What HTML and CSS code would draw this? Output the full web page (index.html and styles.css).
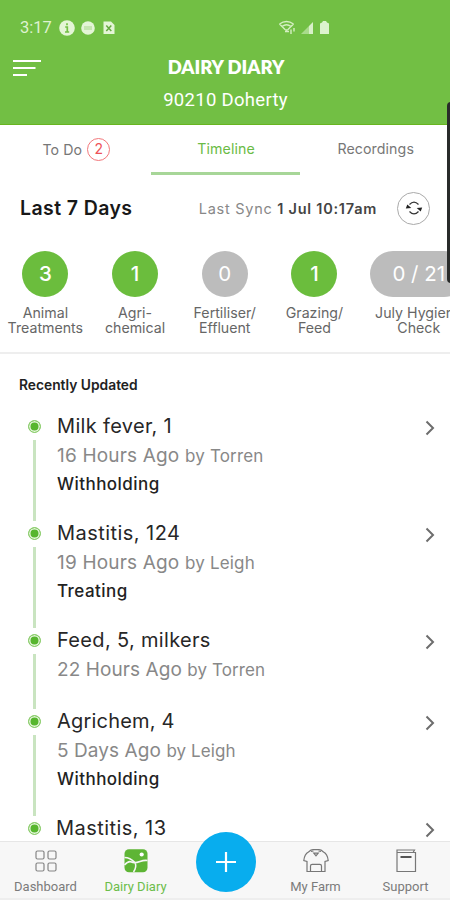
FILE: index.html
```html
<!DOCTYPE html>
<html lang="en">
<head>
<meta charset="utf-8">
<title>Dairy Diary</title>
<link rel="stylesheet" href="styles.css">
</head>
<body>
<div class="app">
  <header class="header">
    <div class="status">
      <span class="clock">3:17</span>
      <svg class="status-left" width="60" height="16" viewBox="0 0 60 16">
        <circle cx="8" cy="8" r="7.8" fill="#e4f5d6"/>
        <path d="M8 3.3v2M6.2 7H8.300v5M6 12h4.200" stroke="#72bf44" stroke-width="1.700" fill="none"/>
        <circle cx="29" cy="8" r="6.800" fill="#e4f5d6"/>
        <path d="M25 7h8M25 9h8" stroke="#a5d888" stroke-width="1.200"/>
        <path d="M44.500 1.500h7.500l3.500 3.500v9h-11z" fill="#e4f5d6"/>
        <path d="M47.300 5.500l5 5.500M52.300 5.500l-5 5.500" stroke="#64a93e" stroke-width="1.500"/>
      </svg>
      <svg class="status-right" width="52" height="16" viewBox="0 0 52 16">
        <g fill="none" stroke="#d5efc3" stroke-width="1.400">
          <path d="M1.500 4Q8.500-1 15.500 4M4 6.500q4.500-3.500 9 0M1.500 4l5.500 5.500q1.500 1 3 0L15.500 4M7 11.500h4M13 9.500v4.500M16 8v3.500"/>
        </g>
        <path d="M23 14l8-8v8z" fill="#a9db8b"/><path d="M31 6L35 2v12h-4z" fill="#d8f0c8"/>
        <path d="M42 3.500L44 2.500 45 1h3l1 1.500 2 1V14h-9z" fill="#dcf3cd"/>
      </svg>
    </div>
    <svg class="menu" width="28" height="18" viewBox="0 0 28 18"><path d="M0 2h28M0 9h22.500M0 16h14" stroke="#fff" stroke-width="2.200"/></svg>
    <h1 class="title">DAIRY DIARY</h1>
    <p class="farm">90210 Doherty</p>
  </header>

  <nav class="tabs">
    <div class="tab todo">To Do <span class="count">2</span></div>
    <div class="tab active">Timeline</div>
    <div class="tab">Recordings</div>
  </nav>

  <section class="summary">
    <div class="summary-head">
      <h2 class="range">Last 7 Days</h2>
      <p class="sync">Last Sync <b>1 Jul 10:17am</b></p>
      <span class="refresh"><svg width="18" height="18" viewBox="0 0 18 18"><path d="M4.500 5.500Q9 .8 13.500 5.500M4.500 12.500Q9 17.200 13.500 12.500" fill="none" stroke="#333" stroke-width="1.200"/><path d="M.8 9.500l1.500-4 4 3.500zM17.200 8.500l-1.500 4-4-3.500z" fill="#222"/></svg></span>
    </div>
    <div class="stats">
      <div class="stat"><span class="bubble">3</span><span>Animal<br>Treatments</span></div>
      <div class="stat"><span class="bubble">1</span><span>Agri-<br>chemical</span></div>
      <div class="stat"><span class="bubble none">0</span><span>Fertiliser/<br>Effluent</span></div>
      <div class="stat"><span class="bubble">1</span><span>Grazing/<br>Feed</span></div>
      <div class="stat wide"><span class="bubble none">0 / 21</span><span>July Hygiene<br>Check</span></div>
    </div>
  </section>

  <main class="timeline">
    <h3 class="heading">Recently Updated</h3>
    <article class="entry">
      <div class="rail"><i class="dot"></i><i class="line"></i></div>
      <div class="body"><h4>Milk fever, 1</h4><p class="when">16 Hours Ago <small>by Torren</small></p><p class="state">Withholding</p></div>
      <svg class="chevron" width="10" height="16" viewBox="0 0 10 16"><path d="M1.500 1.500L8 8l-6.500 6.500"/></svg>
    </article>
    <article class="entry">
      <div class="rail"><i class="dot"></i><i class="line"></i></div>
      <div class="body"><h4 class="loose">Mastitis, 124</h4><p class="when">19 Hours Ago <small>by Leigh</small></p><p class="state">Treating</p></div>
      <svg class="chevron" width="10" height="16" viewBox="0 0 10 16"><path d="M1.500 1.500L8 8l-6.500 6.500"/></svg>
    </article>
    <article class="entry short">
      <div class="rail"><i class="dot"></i><i class="line"></i></div>
      <div class="body"><h4>Feed, 5, milkers</h4><p class="when tight">22 Hours Ago <small>by Torren</small></p></div>
      <svg class="chevron" width="10" height="16" viewBox="0 0 10 16"><path d="M1.500 1.500L8 8l-6.500 6.500"/></svg>
    </article>
    <article class="entry">
      <div class="rail"><i class="dot"></i><i class="line"></i></div>
      <div class="body"><h4 class="snug">Agrichem, 4</h4><p class="when tight">5 Days Ago <small>by Leigh</small></p><p class="state">Withholding</p></div>
      <svg class="chevron" width="10" height="16" viewBox="0 0 10 16"><path d="M1.500 1.500L8 8l-6.500 6.500"/></svg>
    </article>
    <article class="entry last">
      <div class="rail"><i class="dot"></i></div>
      <div class="body"><h4 class="loose">Mastitis, 13</h4></div>
      <svg class="chevron" width="10" height="16" viewBox="0 0 10 16"><path d="M1.500 1.500L8 8l-6.500 6.500"/></svg>
    </article>
  </main>

  <nav class="bottom">
    <div class="item">
      <svg width="26" height="26" viewBox="0 0 26 26"><g fill="none" stroke="#858585" stroke-width="1.200"><rect x="3" y="3" width="8" height="8" rx="1.500"/><rect x="15" y="3" width="8" height="8" rx="1.500"/><rect x="3" y="15" width="8" height="8" rx="1.500"/><rect x="15" y="15" width="8" height="8" rx="1.500"/></g></svg>
      <span>Dashboard</span>
    </div>
    <div class="item current">
      <svg width="26" height="26" viewBox="0 0 26 26"><rect x="1.500" y="1.300" width="23" height="23" rx="4.500" fill="#5eb535"/><path d="M1.500 9.500Q7 9.500 12 14.500M1.500 17Q5.500 12.500 8.500 14T17 13.500Q21 12 24.500 12.500M12 14.500Q14 19 10.500 24" fill="none" stroke="#f7f7f7" stroke-width="1.500"/><circle cx="18.700" cy="6.500" r="2.100" fill="#fff"/></svg>
      <span>Dairy Diary</span>
    </div>
    <div class="item add"><span class="fab"><svg width="24" height="24" viewBox="0 0 24 24"><path d="M12 2v20M2 12h20" stroke="#fff" stroke-width="2.200"/></svg></span></div>
    <div class="item">
      <svg width="26" height="26" viewBox="0 0 26 26"><g fill="none" stroke="#777" stroke-width="1.200"><path d="M4 23.500V13.500L.8 12.500Q1.500 6 5.500 4Q8 1.700 10 1.700H16Q18 1.700 20.500 4Q24.500 6 25.200 12.500L22 13.500V23.500z"/><path d="M7.500 23V18Q7.500 16.300 9.200 16.300H16.800Q18.500 16.300 18.500 18V23M8 3.500l2.500-.5M18 3.500l-2.500-.5"/><path d="M10.800 5.200h4.400L13 7.800z"/></g></svg>
      <span>My Farm</span>
    </div>
    <div class="item">
      <svg width="26" height="26" viewBox="0 0 26 26"><g fill="none" stroke="#777" stroke-width="1.200"><path d="M4 4.500v19h18.500v-19zM4 4.500V2h17.500l-1.500 2.500"/><path d="M7.500 9h11" stroke="#555" stroke-width="2"/></g></svg>
      <span>Support</span>
    </div>
  </nav>
  <div class="edge"></div>
</div>
</body>
</html>
```
FILE: styles.css
```css
* { box-sizing: border-box; }
body, h1, h2, h3, h4, p { margin: 0; font-weight: 400; }
body { font-family: Inter, sans-serif; background: #fff; overflow: hidden; }
.app { position: relative; width: 450px; height: 900px; display: flex; flex-direction: column; overflow: hidden; }

.header { flex: none; height: 125px; padding-top: 20px; background: #72bf44; border-bottom: 1px solid #68b51f; color: #fff; display: grid; grid-template-columns: 54px 1fr 54px; grid-template-rows: 16px 62px; align-content: start; }
.status { grid-column: 1 / 4; display: flex; align-items: center; height: 16px; padding: 0 120px 0 20px; }
.clock { width: 39px; font: 16.500px/16px Roboto, sans-serif; color: #def2d0; }
.status-left { display: block; }
.status-right { display: block; margin-left: auto; }
.menu { grid-row: 2; margin: 23px 0 0 13px; }
.title { grid-row: 2; grid-column: 2; margin-top: 19px; text-align: center; font: 800 18.500px/24px Lato, sans-serif; padding-left: 2px; }
.farm { grid-row: 3; grid-column: 2; text-align: center; font: 18.500px/24px Roboto, sans-serif; letter-spacing: .3px; padding-left: 1px; margin-top: -10px; }

.tabs { flex: none; height: 50px; display: flex; }
.tab { flex: 1; display: flex; justify-content: center; align-items: center; font-size: 14.200px; color: #777; letter-spacing: .1px; padding: 0 0 1px 1px; border-bottom: 3px solid transparent; }
.active { color: #6abb45; border-bottom-color: #a7d698; }
.todo { padding: 2px 0 0 2px; gap: 5px; }
.count { width: 23px; height: 23px; border: 1.500px solid #f2777b; border-radius: 50%; color: #ee5258; font-size: 14px; line-height: 20px; text-align: center; }

.summary { flex: none; height: 179px; border-bottom: 2px solid #eee; }
.summary-head { height: 66px; display: flex; align-items: center; padding: 0 20px 0 20px; }
.range { font-size: 19.500px; font-weight: 600; color: #181818; letter-spacing: .4px; }
.sync { margin-left: auto; font-size: 14.500px; color: #888; letter-spacing: .74px; white-space: nowrap; }
.sync b { font-weight: 600; color: #444; }
.refresh { width: 33px; height: 33px; margin-left: 20px; border: 1px solid #aaa; border-radius: 50%; display: flex; align-items: center; justify-content: center; }
.stats { display: flex; padding: 10px 0 0 .5px; overflow: hidden; }
.stat { flex: none; width: 89.700px; display: flex; flex-direction: column; align-items: center; text-align: center; font-size: 14.200px; line-height: 15px; color: #666; gap: 8px; white-space: nowrap; }
.wide { width: 119px; }
.bubble { width: 46px; height: 46px; border-radius: 23px; background: #6bbd3d; color: #fff; font-size: 20.500px; line-height: 46px; font-weight: 500; }
.none { background: #bcbcbc; font-weight: 400; }
.wide .bubble { width: 97px; }

.timeline { flex: 1; min-height: 0; overflow: hidden; padding: 21px 15px 0 19px; }
.heading { font-size: 13.800px; line-height: 20px; font-weight: 600; color: #222; height: 34.700px; }
.entry { display: flex; height: 107.200px; }
.short { height: 80.800px; }
.rail { width: 38px; display: flex; flex-direction: column; padding: 10px 0 0 9px; }
.dot { flex: none; width: 13px; height: 13px; border-radius: 50%; border: 1.500px solid #8bcd6b; background: #57b62e; box-shadow: inset 0 0 0 1.500px #e4f5da; }
.line { flex: 1; width: 3px; margin: 7px 0 -4px 4.500px; background: #c9e4c0; }
.body { flex: 1; }
.body h4 { font-size: 20px; line-height: 32px; color: #272727; letter-spacing: .33px; }
.body .loose { letter-spacing: .45px; }
.body .snug { letter-spacing: .2px; }
.last h4 { margin-left: -1px; }
.when { font-size: 19px; line-height: 27px; color: #888; letter-spacing: .18px; }
.tight { letter-spacing: .08px; }
.when small { font-size: 17px; }
.state { font-size: 17px; line-height: 28px; font-weight: 500; color: #222; letter-spacing: .45px; }
.chevron { margin-top: 10px; fill: none; stroke: #6d6d6d; stroke-width: 2; }

.bottom { flex: none; height: 59px; background: #f7f7f7; border-top: 1px solid #e6e6e6; border-bottom: 2px solid #eee; display: flex; }
.item { flex: 1; display: flex; flex-direction: column; align-items: center; padding: 6px 0 0 1px; font: 13px/18px Roboto, sans-serif; color: #7b7b7b; gap: 4px; white-space: nowrap; }
.item svg { display: block; }
.current { color: #6cbd4a; }
.fab { flex: none; width: 60px; height: 60px; margin-top: -16px; border-radius: 50%; background: #08adee; display: flex; align-items: center; justify-content: center; }
.edge { position: absolute; left: 447px; top: 102px; width: 8px; height: 181px; border-radius: 4px; background: #292b2a; }
```
